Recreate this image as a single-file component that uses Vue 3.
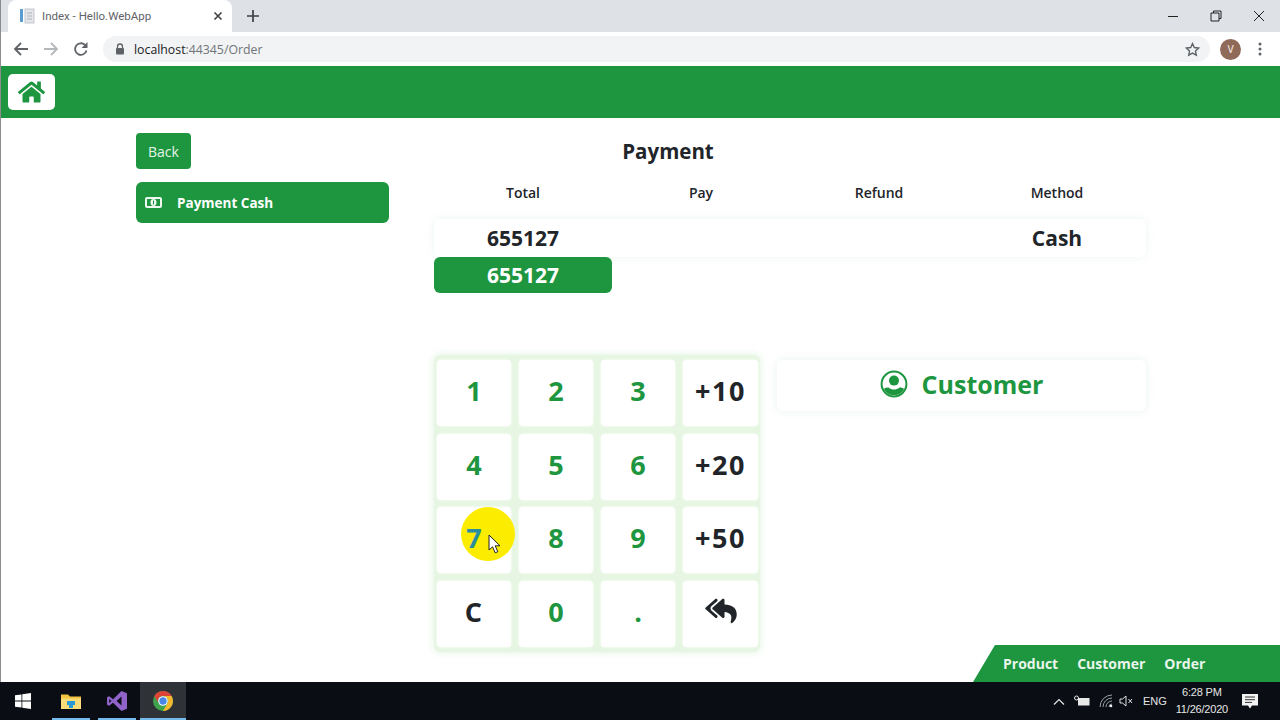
<script setup>
const columns = ['Total', 'Pay', 'Refund', 'Method']
const keys = [
  { label: '1' }, { label: '2' }, { label: '3' }, { label: '+10', dark: true },
  { label: '4' }, { label: '5' }, { label: '6' }, { label: '+20', dark: true },
  { label: '7', marked: true }, { label: '8' }, { label: '9' }, { label: '+50', dark: true },
  { label: 'C', dark: true }, { label: '0' }, { label: '.' }, { label: 'back', dark: true, icon: true },
]
const links = ['Product', 'Customer', 'Order']
</script>

<template>
  <div class="window">
    <div class="tabstrip">
      <div class="tab">
        <svg class="favicon" width="16" height="16" viewBox="0 0 16 16">
          <rect x="0" y="1" width="3" height="13" fill="#5b9bd0" />
          <rect x="5" y="1" width="9" height="14" fill="#e4e6ea" stroke="#c4c7cc" />
          <path d="M7 5h5M7 8h5M7 11h5" stroke="#aeb2b8" />
        </svg>
        <span class="tab-title">Index - Hello.WebApp</span>
        <svg class="tab-close" width="10" height="10" viewBox="0 0 10 10">
          <path d="M1.5 1.5l7 7M8.5 1.5l-7 7" stroke="#3c4043" stroke-width="1.6" />
        </svg>
      </div>
      <svg class="tab-new" width="12" height="12" viewBox="0 0 12 12">
        <path d="M6 0v12M0 6h12" stroke="#3c4043" stroke-width="1.7" />
      </svg>
      <div class="win-buttons">
        <svg width="12" height="12" viewBox="0 0 12 12"><path d="M1 6.5h10" stroke="#222" /></svg>
        <svg width="12" height="12" viewBox="0 0 12 12"><path d="M3.5 3V1h7.5v7.5H9M1 3h8v8H1z" fill="none" stroke="#222" /></svg>
        <svg width="12" height="12" viewBox="0 0 12 12"><path d="M1 1l10 10M11 1L1 11" stroke="#222" /></svg>
      </div>
    </div>

    <div class="toolbar">
      <svg width="16" height="16" viewBox="0 0 16 16">
        <path d="M15 8H2M8 2L2 8l6 6" fill="none" stroke="#5f6368" stroke-width="1.8" />
      </svg>
      <svg width="16" height="16" viewBox="0 0 16 16">
        <path d="M1 8h13M8 2l6 6-6 6" fill="none" stroke="#b4b7bb" stroke-width="1.8" />
      </svg>
      <svg width="16" height="16" viewBox="0 0 16 16">
        <path d="M13.5 9.5A5.8 5.8 0 1 1 12 4" fill="none" stroke="#5f6368" stroke-width="1.8" />
        <path d="M14.5 1v6h-6z" fill="#5f6368" />
      </svg>
      <div class="omnibox">
        <svg width="10" height="12" viewBox="0 0 10 12">
          <path d="M2.5 5V3.5a2.5 2.5 0 0 1 5 0V5" fill="none" stroke="#5f6368" stroke-width="1.3" />
          <rect x="1" y="5" width="8" height="6.5" rx="1" fill="#5f6368" />
        </svg>
        <span class="url">localhost<span class="url-rest">:44345/Order</span></span>
        <svg class="star" width="15" height="15" viewBox="0 0 24 24">
          <path d="M12 2.5l2.9 6.3 6.9.8-5.1 4.7 1.4 6.8-6.1-3.4-6.1 3.4 1.4-6.8-5.1-4.7 6.9-.8z" fill="none" stroke="#5f6368" stroke-width="2.2" />
        </svg>
      </div>
      <div class="avatar">V</div>
      <svg width="4" height="14" viewBox="0 0 4 14">
        <circle cx="2" cy="2" r="1.5" fill="#5f6368" />
        <circle cx="2" cy="7" r="1.5" fill="#5f6368" />
        <circle cx="2" cy="12" r="1.5" fill="#5f6368" />
      </svg>
    </div>

    <header class="navbar">
      <button class="home">
        <svg width="27" height="24" viewBox="0 0 576 512">
          <path fill="#1e9640" d="M280.37 148.26L96 300.11V464a16 16 0 0 0 16 16l112.06-.29a16 16 0 0 0 15.92-16V368a16 16 0 0 1 16-16h64a16 16 0 0 1 16 16v95.64a16 16 0 0 0 16 16.05L464 480a16 16 0 0 0 16-16V300L295.67 148.26a12.19 12.19 0 0 0-15.3 0zM571.6 251.47L488 182.56V44.05a12 12 0 0 0-12-12h-56a12 12 0 0 0-12 12v72.61L318.47 43a48 48 0 0 0-61 0L4.34 251.47a12 12 0 0 0-1.6 16.9l25.5 31A12 12 0 0 0 45.15 301l235.22-193.74a12.19 12.19 0 0 1 15.3 0L530.9 301a12 12 0 0 0 16.9-1.6l25.5-31a12 12 0 0 0-1.7-16.93z" />
        </svg>
      </button>
    </header>

    <div class="page">
      <aside class="sidebar">
        <button class="back">Back</button>
        <button class="method">
          <svg width="17" height="11" viewBox="0 0 17 11">
            <rect x="1" y="1" width="15" height="9" rx="1" fill="none" stroke="#eef7f0" stroke-width="2" />
            <ellipse cx="8.5" cy="5.5" rx="3" ry="3.4" fill="#eef7f0" />
            <path d="M8.5 3.5v4" stroke="#1e9640" />
          </svg>
          <span>Payment Cash</span>
        </button>
      </aside>

      <main class="content">
        <h1>Payment</h1>
        <div class="cols heads">
          <span v-for="c in columns" :key="c">{{ c }}</span>
        </div>
        <div class="cols values">
          <span>655127</span>
          <span></span>
          <span></span>
          <span>Cash</span>
        </div>
        <div class="cols">
          <button class="total-btn">655127</button>
        </div>

        <div class="lower">
          <div class="keypad">
            <button
              v-for="k in keys"
              :key="k.label"
              class="key"
              :class="{ dark: k.dark, marked: k.marked }"
            >
              <template v-if="k.icon">
                <svg width="32" height="28" viewBox="0 0 576 512">
                  <path fill="#212529" d="M136.309 189.836L312.313 37.851C327.72 24.546 352 35.348 352 56.015v82.763c129.182 10.231 224 52.212 224 183.548 0 61.441-39.582 122.309-83.333 154.132-13.653 9.931-33.111-2.533-28.077-18.631 38.512-123.162-3.922-169.482-112.59-182.015v84.175c0 20.701-24.3 31.453-39.687 18.164L136.309 226.164c-11.071-9.561-11.086-26.753 0-36.328zm-128 36.328L184.313 378.15C199.7 391.439 224 380.687 224 359.986v-15.818l-108.606-93.785A55.96 55.96 0 0 1 96 207.998a55.953 55.953 0 0 1 19.393-42.38L224 71.832V56.015c0-20.667-24.28-31.469-39.687-18.164L8.309 189.836c-11.086 9.575-11.071 26.767 0 36.328z" />
                </svg>
              </template>
              <template v-else>
                <span class="key-label">{{ k.label }}</span>
              </template>
              <template v-if="k.marked">
                <span class="highlight"></span>
                <svg class="cursor" width="13" height="20" viewBox="0 0 13 20">
                  <path d="M1 1v15l3.6-3.2 2.6 6 2.6-1.1-2.6-5.9H12z" fill="#fff" stroke="#222" stroke-width="1" />
                </svg>
              </template>
            </button>
          </div>

          <div class="customer">
            <svg width="28" height="28" viewBox="0 0 28 28">
              <defs>
                <clipPath id="disc"><circle cx="14" cy="14" r="11.2" /></clipPath>
              </defs>
              <circle cx="14" cy="14" r="12.4" fill="none" stroke="#1e9640" stroke-width="2" />
              <circle cx="14" cy="10.6" r="5" fill="#1e9640" />
              <path d="M2 28V22c0-3 3-4.500 6.500-4.500 2 1.500 3.500 2 5.500 2s3.500-.5 5.500-2C23 17.500 26 19 26 22v6z" fill="#1e9640" clip-path="url(#disc)" />
            </svg>
            <span>Customer</span>
          </div>
        </div>
      </main>

      <nav class="corner">
        <a v-for="l in links" :key="l">{{ l }}</a>
      </nav>
    </div>

    <footer class="taskbar">
      <svg class="start" width="16" height="16" viewBox="0 0 16 16">
        <path d="M0 2.300l6.500-.9v6.200H0zM7.300 1.300L16 0v7.600H7.300zM0 8.400h6.500v6.200L0 13.700zM7.300 8.400H16V16l-8.700-1.200z" fill="#fff" />
      </svg>
      <div class="task">
        <svg width="20" height="17" viewBox="0 0 20 17">
          <path d="M0 1.500h7l2 2h11V16H0z" fill="#f5c542" />
          <path d="M0 5.500h20V16H0z" fill="#fbdc78" />
          <path d="M6 8h8v4h-2v3H8v-3H6z" fill="#2a9ad6" />
        </svg>
      </div>
      <div class="task">
        <svg width="20" height="20" viewBox="0 0 20 20">
          <path d="M14.500 0L20 2.300v15.400L14.500 20 6 11.800 2.200 14.800 0 13.700V6.300l2.200-1.100L6 8.200zM14.500 5.400L9.600 10l4.900 4.600zM2.200 7.900v4.200L4.400 10z" fill="#8f63c9" fill-rule="evenodd" />
        </svg>
      </div>
      <div class="task current">
        <svg width="20" height="20" viewBox="0 0 20 20">
          <circle cx="10" cy="10" r="10" fill="#3fa34d" />
          <path d="M1.340 5A10 10 0 0 1 18.660 5H10A5 5 0 0 0 5.670 12.500z" fill="#db4437" />
          <path d="M18.660 5A10 10 0 0 1 10 20L14.330 12.500A5 5 0 0 0 10 5z" fill="#f4b82e" />
          <circle cx="10" cy="10" r="4.800" fill="#fff" />
          <circle cx="10" cy="10" r="3.700" fill="#4a86e8" />
        </svg>
      </div>
      <div class="tray">
        <svg width="12" height="7" viewBox="0 0 12 7"><path d="M1 6.500l5-5 5 5" fill="none" stroke="#e5e5e5" stroke-width="1.200" /></svg>
        <svg width="16" height="12" viewBox="0 0 16 12">
          <rect x="4.500" y="3.500" width="10.500" height="6.500" fill="#e8e8e8" stroke="#e8e8e8" />
          <circle cx="2.500" cy="3" r="2" fill="none" stroke="#e8e8e8" />
        </svg>
        <svg width="14" height="14" viewBox="0 0 14 14">
          <path d="M1 13A12 12 0 0 1 13 1M4 13a9 9 0 0 1 9-9M7 13a6 6 0 0 1 6-6M10 13a3 3 0 0 1 3-3" fill="none" stroke="#9aa0a6" />
          <circle cx="12" cy="12" r="1.300" fill="#eee" />
        </svg>
        <svg class="speaker" width="14" height="12" viewBox="0 0 14 12">
          <path d="M1 4h2.500L7 1v10L3.500 8H1z" fill="none" stroke="#e0e0e0" />
          <path d="M9.500 4l3.500 4M13 4L9.500 8" stroke="#e0e0e0" />
        </svg>
        <span class="lang">ENG</span>
        <div class="clock">
          <span>6:28 PM</span>
          <span>11/26/2020</span>
        </div>
        <svg class="notify" width="16" height="15" viewBox="0 0 16 15">
          <path d="M0 0h16v11.500h-6L8 14.500l-2-3H0z" fill="#f2f2f2" />
          <path d="M3 3h10M3 5.700h10M3 8.400h7" stroke="#333" />
        </svg>
      </div>
    </footer>
  </div>
</template>

<style>
html, body {
  margin: 0;
  background: #fff;
  overflow: hidden;
}
</style>

<style scoped>
.window {
  position: relative;
  width: 1280px;
  height: 720px;
  display: flex;
  flex-direction: column;
  overflow: hidden;
  font-family: "Open Sans", "Noto Sans", "Liberation Sans", sans-serif;
  color: #212529;
}

/* thin window frame on the left edge */
.window::before {
  content: "";
  position: absolute;
  left: 0;
  top: 0;
  bottom: 38px;
  width: 1px;
  background: #8a8d90;
  z-index: 3;
}

button {
  font-family: inherit;
  border: 0;
  cursor: pointer;
}

.tabstrip {
  height: 32px;
  display: flex;
  align-items: flex-end;
  padding-left: 8px;
  background: #dee1e6;
}

.tab {
  width: 224px;
  height: 32px;
  box-sizing: border-box;
  display: flex;
  align-items: center;
  padding: 0 9px 0 12px;
  background: #fff;
  border-radius: 8px 8px 0 0;
}

.favicon {
  flex: none;
  margin-right: 6px;
}

.tab-title {
  flex: 1;
  font-family: Roboto, "Open Sans", sans-serif;
  font-size: 11.500px;
  color: #5f6368;
  white-space: nowrap;
}

.tab-new {
  margin: 0 0 10px 15px;
}

.win-buttons {
  margin-left: auto;
  display: flex;
  gap: 31px;
  padding: 0 15px 10px 0;
}

.toolbar {
  height: 34px;
  display: flex;
  align-items: center;
  gap: 14px;
  padding: 0 18px 0 13px;
  background: #fff;
}

.omnibox {
  flex: 1;
  height: 26px;
  display: flex;
  align-items: center;
  padding: 0 10px 0 12px;
  border-radius: 13px;
  background: #f1f3f4;
}

.url {
  margin-left: 9px;
  font-size: 12.300px;
  color: #202124;
}

.url-rest {
  color: #70757a;
}

.star {
  margin-left: auto;
}

.avatar {
  width: 21px;
  height: 21px;
  margin: 0 3px 0 -4px;
  border-radius: 50%;
  display: flex;
  align-items: center;
  justify-content: center;
  background: #8f6a58;
  color: #e9dcd5;
  font-size: 10px;
  font-weight: 600;
}

.navbar {
  height: 52px;
  box-sizing: border-box;
  display: flex;
  align-items: center;
  padding: 0 8px;
  background: #1e9640;
}

.home {
  width: 47px;
  height: 36px;
  display: flex;
  align-items: center;
  justify-content: center;
  padding: 0;
  border-radius: 5px;
  background: #fff;
}

.page {
  position: relative;
  flex: 1;
  display: flex;
  align-items: flex-start;
  padding: 15px 0 0 136px;
  min-height: 0;
}

.sidebar {
  width: 253px;
  flex: none;
  display: flex;
  flex-direction: column;
  align-items: flex-start;
  gap: 13px;
}

.back {
  width: 55px;
  height: 36px;
  padding: 0;
  border-radius: 4px;
  background: #1e9640;
  color: #e6f4e9;
  font-size: 14px;
}

.method {
  width: 253px;
  height: 41px;
  display: flex;
  align-items: center;
  gap: 15px;
  padding: 0 0 0 9px;
  border-radius: 6px;
  background: #1e9640;
  color: #fff;
  font-size: 13.500px;
  font-weight: 700;
}

.content {
  width: 712px;
  flex: none;
  margin-left: 45px;
}

h1 {
  margin: 4px 0 0;
  padding-right: 244px;
  text-align: center;
  font-size: 20.500px;
  line-height: 28px;
  font-weight: 700;
  color: #212529;
}

.cols {
  display: grid;
  grid-template-columns: repeat(4, 178px);
  text-align: center;
}

.heads {
  margin-top: 18px;
  font-size: 14px;
  font-weight: 600;
  line-height: 20px;
}

.values {
  height: 38px;
  margin-top: 16px;
  align-items: center;
  font-size: 21px;
  font-weight: 700;
  border-radius: 6px;
  background: #fff;
  box-shadow: 0 0 10px rgba(30, 150, 64, 0.08);
}

.total-btn {
  height: 36px;
  padding: 0;
  border-radius: 6px;
  background: #1e9640;
  color: #fff;
  font-size: 21px;
  font-weight: 700;
}

.lower {
  display: flex;
  align-items: flex-start;
  gap: 17px;
  margin-top: 62px;
}

.keypad {
  width: 326px;
  box-sizing: border-box;
  display: grid;
  grid-template-columns: 74px 74px 74px 75px;
  grid-auto-rows: 66px;
  column-gap: 8px;
  row-gap: 7.670px;
  padding: 5px 2px 5px 3px;
  border-radius: 6px;
  background: #e6f6e2;
  box-shadow: 0 0 9px rgba(60, 180, 60, 0.16);
}

.key {
  position: relative;
  display: flex;
  align-items: center;
  justify-content: center;
  padding: 0 0 5px;
  border-radius: 4px;
  background: #fff;
  box-shadow: 0 0 3px #fff;
  color: #1e9640;
  font-size: 27px;
  font-weight: 700;
  line-height: 1;
}

.key.dark {
  color: #212529;
  letter-spacing: 1.500px;
}

.key-label {
  position: relative;
  z-index: 1;
}

.key.marked .key-label {
  color: #2a8f9c;
}

.highlight {
  position: absolute;
  left: 24px;
  top: 0;
  width: 54px;
  height: 54px;
  border-radius: 50%;
  background: #fcec00;
}

.cursor {
  position: absolute;
  left: 51px;
  top: 27px;
  z-index: 2;
}

.customer {
  width: 369px;
  height: 51px;
  box-sizing: border-box;
  padding-bottom: 3px;
  margin-top: 5px;
  display: flex;
  align-items: center;
  justify-content: center;
  gap: 14px;
  border-radius: 6px;
  background: #fff;
  box-shadow: 0 0 10px rgba(30, 150, 64, 0.1);
  color: #1e9640;
  font-size: 25px;
  font-weight: 700;
}

.corner {
  position: absolute;
  right: 0;
  bottom: 0;
  width: 307px;
  height: 37px;
  box-sizing: border-box;
  display: flex;
  align-items: center;
  gap: 19px;
  padding-left: 30px;
  background: #1e9640;
  clip-path: polygon(22px 0, 100% 0, 100% 100%, 0 100%);
  color: #e9f5ec;
  font-size: 14px;
  font-weight: 700;
}

.taskbar {
  height: 38px;
  flex: none;
  display: flex;
  align-items: center;
  background: #0a0e14;
  color: #e6e6e6;
}

.start {
  margin: 0 17px 0 15px;
}

.task {
  position: relative;
  height: 38px;
  width: 46px;
  display: flex;
  align-items: center;
  justify-content: center;
}

/* running-app underline */
.task::after {
  content: "";
  position: absolute;
  left: 4px;
  right: 4px;
  bottom: 0;
  height: 2px;
  background: #76b9ed;
}

.current {
  background-color: #2f3236;
}

.current::after {
  left: 0;
  right: 0;
}

.tray {
  margin-left: auto;
  display: flex;
  align-items: center;
  gap: 9px;
  padding-right: 22px;
  font-family: "Liberation Sans", sans-serif;
}

.speaker {
  margin-left: -3px;
}

.lang {
  font-size: 11px;
  margin-left: 1px;
}

.clock {
  display: flex;
  flex-direction: column;
  align-items: center;
  font-size: 11px;
  letter-spacing: -0.200px;
  line-height: 17px;
}

.notify {
  margin-left: 5px;
}
</style>
